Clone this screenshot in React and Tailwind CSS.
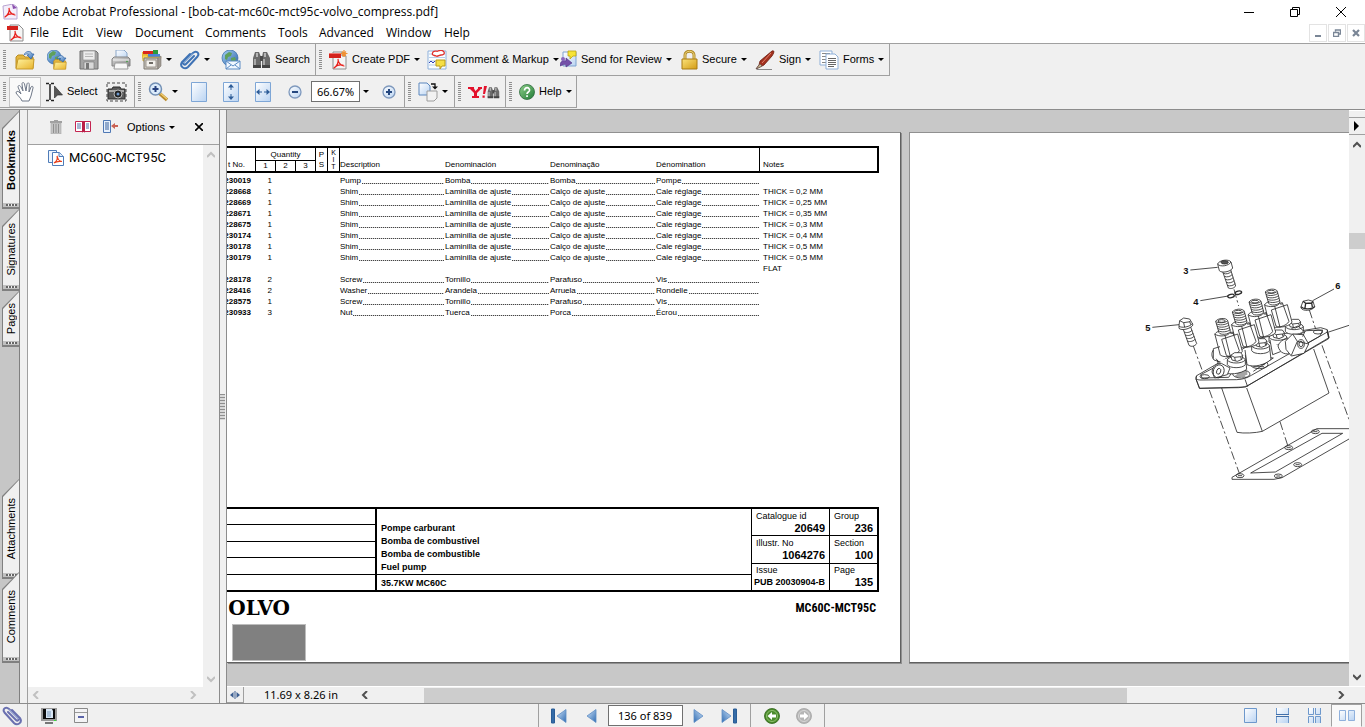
import React, { useState } from "react";

const menuItems = [
  { label: "File", width: "w-8" },
  { label: "Edit", width: "w-[34px]" },
  { label: "View", width: "w-[39px]" },
  { label: "Document", width: "w-[70px]" },
  { label: "Comments", width: "w-[73px]" },
  { label: "Tools", width: "w-[41px]" },
  { label: "Advanced", width: "w-[67px]" },
  { label: "Window", width: "w-[58px]" },
  { label: "Help", width: "w-10" },
];

const shim = ["Shim", "Laminilla de ajuste", "Calço de ajuste", "Cale réglage"];

const parts = [
  { no: "230019", qty: 1, names: ["Pump", "Bomba", "Bomba", "Pompe"] },
  { no: "228668", qty: 1, names: shim, note: "THICK = 0,2 MM" },
  { no: "228669", qty: 1, names: shim, note: "THICK = 0,25 MM" },
  { no: "228671", qty: 1, names: shim, note: "THICK = 0,35 MM" },
  { no: "228675", qty: 1, names: shim, note: "THICK = 0,3 MM" },
  { no: "230174", qty: 1, names: shim, note: "THICK = 0,4 MM" },
  { no: "230178", qty: 1, names: shim, note: "THICK = 0,5 MM" },
  { no: "230179", qty: 1, names: shim, note: "THICK = 0,5 MM" },
  { no: "", qty: "", names: null, note: "FLAT" },
  { no: "228178", qty: 2, names: ["Screw", "Tornillo", "Parafuso", "Vis"] },
  { no: "228416", qty: 2, names: ["Washer", "Arandela", "Arruela", "Rondelle"] },
  { no: "228575", qty: 1, names: ["Screw", "Tornillo", "Parafuso", "Vis"] },
  { no: "230933", qty: 3, names: ["Nut", "Tuerca", "Porca", "Écrou"] },
];

function Ico({ w = 20, h = 20, children }) {
  return (
    <svg width={w} height={h} viewBox={`0 0 ${w} ${h}`} className="shrink-0" aria-hidden="true">
      {children}
    </svg>
  );
}

/* Gradients shared by all of the icons */
function Gradients() {
  const list = [
    ["gYellow", "#fff3a0", "#e8b32c"],
    ["gBlue", "#cfe3f8", "#2f6cb3"],
    ["gPage", "#ffffff", "#b9d3f2"],
    ["gGray", "#d8d8d8", "#8a8a8a"],
    ["gGold", "#fbe27a", "#d39b12"],
    ["gGreen", "#8fd08a", "#1f7a35"],
    ["gGlobe", "#a8d4f5", "#2a5fa8"],
  ];
  return (
    <svg className="absolute size-0" aria-hidden="true">
      <defs>
        {list.map(([id, from, to]) => (
          <linearGradient key={id} id={id} x1="0" y1="0" x2="1" y2="1">
            <stop offset="0" stopColor={from} />
            <stop offset="1" stopColor={to} />
          </linearGradient>
        ))}
      </defs>
    </svg>
  );
}

const Swirl = ({ x = 0, y = 0 }) => (
  <path
    transform={`translate(${x} ${y})`}
    d="M0 9C3 7 5 3 4 0c0 3 2 6.500 6 7M1 8c2-2 5-2.500 8-2"
    fill="none"
    stroke="#e8211c"
    strokeWidth="1.200"
    strokeLinecap="round"
  />
);

const AppIcon = () => (
  <Ico w={16} h={16}>
    <path d="M1 2l10-2 4 3v12H2z" fill="#f4eefa" stroke="#b9a5d3" />
    <path d="M10 0l5 4-4 1z" fill="#8a4fae" />
    <Swirl x={3} y={4} />
  </Ico>
);
const PdfDoc = ({ star }) => (
  <Ico>
    <path d="M5 2h9l4 4v13H5z" fill="#f5f5f5" stroke="#8d8d8d" />
    <path d="M14 2v4h4" fill="#ddd" stroke="#8d8d8d" />
    <path d="M1 3h12v5H1z" fill="#d4221c" />
    <path d="M1 3h12v1H1z" fill="#ef7a74" />
    <Swirl x={6} y={9} />
    {star && <path d="M16 0v7M12.500 3.500h7M14 1.500l4 4M18 1.500l-4 4" stroke="#ef9134" strokeWidth="1.200" />}
  </Ico>
);
const FolderShape = ({ y = 0 }) => (
  <g transform={`translate(0 ${y})`}>
    <path d="M1 7l2-2h5l2 2h8v11H1z" fill="#e3b53d" stroke="#b98d22" />
    <path d="M3 9h16l-1 10H1z" fill="url(#gYellow)" stroke="#c79a2a" />
  </g>
);
const OpenIcon = () => (
  <Ico>
    <FolderShape />
    <path d="M9 5c1-4 7-5 8-1h2l-3 5-4-4h2c-1-2-3-1-5 0z" fill="url(#gBlue)" stroke="#2e62a3" strokeWidth=".7" />
  </Ico>
);
const Globe = ({ r = 7, cx = 7, cy = 7 }) => (
  <g>
    <circle cx={cx} cy={cy} r={r} fill="url(#gGlobe)" stroke="#356aa8" strokeWidth=".7" />
    <path
      transform={`translate(${cx - 7} ${cy - 7})`}
      d="M2 4l4-3 3 1-1 3-3 1-1 3-2-1zM8 7l4-1 1 3-3 4-2-2z"
      fill="#5fa05b"
    />
  </g>
);
const OpenWebIcon = () => (
  <Ico>
    <Globe cx={7} />
    <g transform="translate(6 6) scale(.7)">
      <FolderShape />
    </g>
    <path d="M10 9c2-5 6-4 7-1h2l-3 4-4-3h2c-1-1-2-1-4 0z" fill="url(#gBlue)" stroke="#2e62a3" strokeWidth=".7" />
  </Ico>
);
const SaveIcon = () => (
  <Ico>
    <path d="M1 1h16l2 2v16H1z" fill="#a5a5a5" stroke="#6f6f6f" />
    <path d="M4 1h12v9H4z" fill="#ececec" stroke="#888" strokeWidth=".6" />
    <path d="M6 4h8M6 6.500h8" stroke="#b5b5b5" />
    <path d="M5 12h10v7H5z" fill="#d9d9d9" stroke="#777" strokeWidth=".6" />
    <path d="M7 13h3v6H7z" fill="#777" />
  </Ico>
);
const PrintIcon = () => (
  <Ico>
    <path d="M5 9V0h8l3 3v6z" fill="url(#gPage)" stroke="#8ba7c9" />
    <path d="M1 9l2-2h14l2 2v7H1z" fill="url(#gGray)" stroke="#848484" />
    <path d="M2 10h16" stroke="#f6f6f6" />
    <path d="M4 13h12l1 6H3z" fill="#f7f7f7" stroke="#999" />
    <circle cx="16" cy="11.500" r=".8" fill="#3ca23c" />
  </Ico>
);
const OrganizerIcon = () => (
  <Ico>
    <path d="M0 2h6v5H0z" fill="#f2c73a" />
    <path d="M1 1h10v3H1z" fill="#d8261c" />
    <path d="M11 0h5v4h-5z" fill="#2c9a3c" />
    <path d="M6 4h12v3H6z" fill="#4a84d8" />
    <path d="M0 5h5l1 2h13l-1 4H1z" fill="#f5d44c" stroke="#c79a2a" strokeWidth=".6" />
    <path d="M2 8h14v11H2z" fill="#c9c4bc" stroke="#7f7a72" />
    <path d="M16 8l3-2v10l-3 3z" fill="#a09b93" stroke="#7f7a72" strokeWidth=".6" />
    <path d="M4 10h10v7H4z" fill="#f3f1ec" stroke="#8c877f" strokeWidth=".8" />
    <path d="M7 12h4v2H7z" fill="#6d6a64" />
  </Ico>
);
const ClipIcon = ({ color = "#3f73b5" }) => (
  <Ico>
    <path
      d="M14 6L6 14c-1.500 1.500-3.500 0-2-2l9-9c3-3 7 0 4.500 3.500L8 17c-3 3-9 0-6-5l8-8"
      fill="none"
      stroke={color}
      strokeWidth="2"
      strokeLinecap="round"
    />
    <path d="M13 3.500L3.500 13" stroke="#cfe2f6" strokeWidth=".8" />
  </Ico>
);
const MailIcon = () => (
  <Ico>
    <Globe cx={9} cy={8} r={8} />
    <path d="M5 11h14v8H5z" fill="#f2f8ff" stroke="#5c8cc4" />
    <path d="M5 11l7 5 7-5M5 19l5-4M19 19l-5-4" fill="none" stroke="#5c8cc4" />
  </Ico>
);
const Binoculars = () => (
  <>
    <path d="M3 2h4l2 5v10H1V8zM11 2h4l3 6v9h-8V7z" fill="#6b6b6b" />
    <path d="M4 3h2v4H4zM12 3h2v4h-2z" fill="#b5b5b5" />
    <path d="M8 6h3v5H8z" fill="#4b4b4b" />
    <path d="M2 9h2v7H2zM11 9h2v7h-2z" fill="#a9a9a9" />
    <path d="M1 15h8v3H1zM10 15h8v3h-8z" fill="#444" />
  </>
);
const SearchIcon = () => (
  <Ico w={19}>
    <Binoculars />
  </Ico>
);
const MarkupIcon = () => (
  <Ico>
    <path d="M1 1h18v18H1z" fill="#fafdff" stroke="#8eb1dc" />
    <path d="M2 4h16M2 7.500h16M2 11h16M2 15h16" stroke="#b7cde8" />
    <path d="M6 2c2-2 4 0 5-1 2-1 5-1 6 1s-1 3-3 3-3 2-5 1-5 0-3-4z" fill="#fff" stroke="#e0302c" strokeWidth="1.300" />
    <path d="M2 13l2-2 2 2 2-2" fill="none" stroke="#3142b8" />
    <path d="M9 10h9v6h-3l-2 3v-3H9z" fill="#f5df45" stroke="#b89a1b" />
  </Ico>
);
const ReviewIcon = () => (
  <Ico w={17}>
    <path d="M3 2h13v14H3z" fill="url(#gPage)" stroke="#7fa3d1" />
    <path d="M8 1h8v5h-3l-3 3V6H8z" fill="#f7e436" stroke="#baa213" strokeWidth=".8" />
    <path d="M0 16c0-5 3-6 6-5V8l6 5-6 4v-2c-2-1-3 0-6 1z" fill="#7450a8" stroke="#4d3184" strokeWidth=".6" />
    <circle cx="3" cy="9" r="2" fill="#8a66bd" />
  </Ico>
);
const LockIcon = () => (
  <Ico w={17}>
    <path d="M4 9V5c0-5 9-5 9 0v4" fill="none" stroke="#b08a28" strokeWidth="3" />
    <path d="M4 9V5c0-5 9-5 9 0v4" fill="none" stroke="#f2dc85" strokeWidth="1" />
    <path d="M1 9h15v10H1z" fill="url(#gGold)" stroke="#a87b13" />
  </Ico>
);
const PenIcon = () => (
  <Ico>
    <path d="M17 1c3-1 2 2 0 5l-8 9-4 2-4 2 3-4 1-4z" fill="#a3311f" stroke="#6b1a0e" strokeWidth=".8" />
    <path d="M16 3l-9 10" stroke="#e0826e" />
    <path d="M1 19l4-5 2 2z" fill="#d7c49a" stroke="#555" strokeWidth=".6" />
    <path d="M2 19.500h15" stroke="#888" />
  </Ico>
);
const FormsIcon = () => (
  <Ico>
    <path d="M1 1h12v14H1z" fill="#fff" stroke="#8fb0d9" />
    <path d="M3 3.500h8M3 6.500h4M3 9.500h4M3 12.500h4" stroke="#888" />
    <path d="M7 4h9l3 3v12H7z" fill="#fff" stroke="#8fb0d9" />
    <path d="M9 8.500h8M9 10.500h8M9 12.500h8M9 14.500h8M9 16.500h6" stroke="#666" />
  </Ico>
);
const HandIcon = () => (
  <Ico>
    <path
      d="M7 19c-1-3-4-5-6-8 0-2 2-2 3-1l2 2L3 5c0-2 2-2 3 0l2 4-1-7c0-2 2-2 2.500 0L11 9l1-7c.500-2 2.500-1 2.300.500L14 10l2-5c1-1.500 2.500-.5 2 1l-2 8-2 5z"
      fill="#fff"
      stroke="#6f7888"
    />
  </Ico>
);
const SelectIcon = () => (
  <Ico w={18}>
    <path d="M1 1.500h3M6 1.500h3M5 2v16M1 18.500h3M6 18.500h3" stroke="#222" strokeWidth="1.500" fill="none" />
    <path d="M9.500 4v12l3-3h5z" fill="#555" stroke="#222" strokeWidth=".6" />
  </Ico>
);
const CameraIcon = () => (
  <Ico w={21}>
    <rect x="1" y="1" width="19" height="18" fill="none" stroke="#444" strokeDasharray="3 2" />
    <path d="M2 7h4l1-2h7l1 2h4v10H2z" fill="#5b5b5b" stroke="#2c2c2c" />
    <path d="M3 8h15v2H3z" fill="#a9a9a9" />
    <circle cx="12" cy="12" r="4" fill="#222" stroke="#bbb" />
    <circle cx="12" cy="12" r="1.500" fill="#6f9ad0" />
  </Ico>
);
const ZoomIcon = () => (
  <Ico>
    <path d="M11 11l8 7" stroke="#b98a2b" strokeWidth="3.500" />
    <path d="M12 11l7 6" stroke="#f2cf72" strokeWidth="1.200" />
    <circle cx="7.500" cy="7" r="6" fill="#dcecfb" stroke="#7390b5" strokeWidth="1.500" />
    <path d="M4.500 7h6M7.500 4v6" stroke="#27417f" strokeWidth="2" />
  </Ico>
);
const ViewPageIcon = ({ arrows }) => (
  <Ico w={18} h={20}>
    <path d="M1.500 .5h15v19h-15z" fill="url(#gPage)" stroke="#7ea6d6" />
    {arrows === "v" && (
      <g fill="#2d5c98">
        <path d="M9 2l3 3.500H6zM9 18l3-3.500H6z" />
        <path d="M8.500 5h1v3h-1zM8.500 12h1v3h-1z" />
      </g>
    )}
    {arrows === "h" && (
      <g fill="#2d5c98">
        <path d="M2 10l3.500-3v6zM16 10l-3.500-3v6z" />
        <path d="M5 9.500h3v1H5zM10 9.500h3v1h-3z" />
      </g>
    )}
  </Ico>
);
const RoundSign = ({ plus }) => (
  <Ico w={14} h={14}>
    <circle cx="7" cy="7" r="6" fill="url(#gPage)" stroke="#7f99bd" strokeWidth="1.300" />
    <path d={plus ? "M4 7h6M7 4v6" : "M4 7h6"} stroke="#26487f" strokeWidth="2" />
  </Ico>
);
const RotateIcon = () => (
  <Ico>
    <path d="M1 1h8l3 3v9H1z" fill="url(#gPage)" stroke="#5a86bd" />
    <path d="M9 9h10v7l-3 3H9z" fill="#f2f2f2" stroke="#9c9c9c" />
    <path d="M13 2h4v3" fill="none" stroke="#111" strokeWidth="1.300" />
    <path d="M14 4.500h6l-3 3z" fill="#111" />
  </Ico>
);
const YahooIcon = () => (
  <Ico w={32} h={14}>
    <path d="M0 2h6v1.500L7.500 6 10 3.500V2h4v2h-1L9 8v3h2v2H4v-2h2V8L2 4H0z" fill="#e3122c" />
    <path d="M16 1h3l-2 8h-2zM14.500 10.500h2.200v2.200h-2.200z" fill="#e3122c" />
    <g transform="translate(19 1) scale(.68)">
      <Binoculars />
    </g>
  </Ico>
);
const HelpIcon = () => (
  <Ico w={16} h={16}>
    <circle cx="8" cy="8" r="7.500" fill="url(#gGreen)" stroke="#2d6b3c" strokeWidth=".8" />
    <path d="M5.500 6.500c0-4 5.500-3.500 5 0-.2 1.500-2.500 1.500-2.500 3.500" fill="none" stroke="#fff" strokeWidth="1.700" />
    <path d="M7.200 11.200h1.700v1.700H7.200z" fill="#fff" />
  </Ico>
);
const TrashIcon = () => (
  <Ico w={14} h={14}>
    <path d="M5 0h4v1h4v2H1V1h4z" fill="#a0a0a0" />
    <path d="M2 3h10v11H2z" fill="#c4c4c4" stroke="#aaa" strokeWidth=".6" />
    <path d="M4.500 4v9M7 4v9M9.500 4v9" stroke="#8f8f8f" />
  </Ico>
);
const BookIcon = () => (
  <Ico w={16} h={14}>
    <path d="M.5 1.500h15v10H.5z" fill="#fff" stroke="#c42451" />
    <path d="M2 4h4M2 6h4M2 8h4M11 4h3M11 6h3M11 8h3" stroke="#4f6fa8" />
    <path d="M7 1.500h3V13l-1.500-2L7 13z" fill="#b91f48" />
  </Ico>
);
const ExpandIcon = () => (
  <Ico w={15} h={14}>
    <path d="M.5 .5h7v12h-7z" fill="#e8f1fc" stroke="#5079b5" />
    <path d="M2 3h4M2 5h4M2 7h4M2 9h4" stroke="#38609c" />
    <path d="M8 6l4-3v2h3v2h-3v2z" fill="#c96254" />
  </Ico>
);
const BookmarkIcon = () => (
  <Ico w={16} h={16}>
    <path d="M.5 .5h8v12h-8z" fill="#eef5fd" stroke="#4f7cb8" />
    <path d="M4.500 2.500h7l4 4v9h-11z" fill="#fff" stroke="#4f7cb8" />
    <path d="M11 2.500v4h4.500" fill="#dcebfa" stroke="#4f7cb8" />
    <path d="M6 13c3-2 4-4 3-7 1 4 2 5 5 5.500-3-.5-6 0-8 1.500z" fill="none" stroke="#e8401c" strokeWidth="1.200" />
  </Ico>
);
const Tri = ({ flip, bar }) => (
  <Ico w={bar ? 16 : 11} h={16}>
    <g transform={flip ? `translate(${bar ? 16 : 11} 0) scale(-1 1)` : undefined}>
      {bar && <path d="M.5 1h3v14h-3z" fill="#356ca8" stroke="#2b5d96" />}
      <path
        transform={bar ? "translate(5 0)" : undefined}
        d="M10 1.500v13L1 8z"
        fill="url(#gBlue)"
        stroke="#5e8dc4"
        strokeWidth=".8"
      />
    </g>
  </Ico>
);
const RoundArrow = ({ green }) => (
  <Ico w={16} h={16}>
    <circle cx="8" cy="8" r="7.500" fill={green ? "#4b8b2c" : "#b5b5b5"} stroke={green ? "#2f6518" : "#a4a4a4"} strokeWidth=".8" />
    <circle cx="8" cy="8" r="5.500" fill="none" stroke={green ? "#8fc06f" : "#d6d6d6"} />
    <path
      transform={green ? undefined : "translate(16 0) scale(-1 1)"}
      d="M3.500 8L8 4v2.500h4v3H8V12z"
      fill="#fff"
    />
  </Ico>
);
const Chevron = ({ d, color = "#505050" }) => (
  <Ico w={8} h={8}>
    <path d={d} fill="none" stroke={color} strokeWidth="2" />
  </Ico>
);
const UP = "M0 6l4-4 4 4";
const DOWN = "M0 2l4 4 4-4";
const LEFT = "M6 0L2 4l4 4";
const RIGHT = "M2 0l4 4-4 4";

const Grip = () => (
  <span className="h-5 w-[3px] shrink-0 bg-[repeating-linear-gradient(to_bottom,#8f8f8f_0_1px,#f0f0f0_1px_2px)]" />
);

const Caret = () => (
  <svg width="6" height="3" viewBox="0 0 6 3" className="shrink-0" aria-hidden="true">
    <path d="M0 0h6L3 3z" fill="#000" />
  </svg>
);

function Tool({ icon, label, caret, width, title }) {
  return (
    <button title={title || label} className={`flex h-full shrink-0 items-center gap-1 whitespace-nowrap ${width}`}>
      {icon}
      {label}
      {caret && <Caret />}
    </button>
  );
}

const groupClass = "flex h-full shrink-0 items-center border-r border-b border-[#a0a0a0] pl-[3px]";

function Toolbars() {
  return (
    <div className="border-b border-[#8c8c8c] bg-[#f0f0f0] pb-px text-[11px]">
      <div className="flex h-8">
        <div className={groupClass}>
          <Grip />
          <div className="ml-[9px] flex h-full">
            <Tool icon={<OpenIcon />} width="w-8" title="Open" />
            <Tool icon={<OpenWebIcon />} width="w-8" title="Open Web Page" />
            <Tool icon={<SaveIcon />} width="w-8" title="Save" />
            <Tool icon={<PrintIcon />} width="w-[31px]" title="Print" />
            <Tool icon={<OrganizerIcon />} width="w-[38px]" title="Organizer" caret />
            <Tool icon={<ClipIcon />} width="w-[41px]" title="Attach" caret />
            <Tool icon={<MailIcon />} width="w-[31px]" title="Email" />
            <Tool icon={<SearchIcon />} width="w-[63px]" label="Search" />
          </div>
        </div>
        <div className={groupClass}>
          <Grip />
          <div className="ml-[6px] flex h-full">
            <Tool icon={<PdfDoc star />} width="w-[99px]" label="Create PDF" caret />
            <Tool icon={<MarkupIcon />} width="w-[133px]" label="Comment &amp; Markup" caret />
            <Tool icon={<ReviewIcon />} width="w-[121px]" label="Send for Review" caret />
            <Tool icon={<LockIcon />} width="w-[74px]" label="Secure" caret />
            <Tool icon={<PenIcon />} width="w-16" label="Sign" caret />
            <Tool icon={<FormsIcon />} width="w-[70px]" label="Forms" caret />
          </div>
        </div>
      </div>

      <div className="flex h-8">
        <div className={groupClass}>
          <Grip />
          <button title="Hand Tool" className="ml-[3px] flex h-[30px] w-8 items-center justify-center border border-[#c4c4c4] bg-[#f9f9f9]">
            <HandIcon />
          </button>
          <div className="ml-1 flex h-full">
            <Tool icon={<SelectIcon />} width="w-[61px]" label="Select" />
            <Tool icon={<CameraIcon />} width="w-[28px]" title="Snapshot" />
          </div>
        </div>
        <div className={groupClass}>
          <Grip />
          <div className="ml-[7px] flex h-full">
            <Tool icon={<ZoomIcon />} width="w-[42px]" title="Zoom" caret />
            <Tool icon={<ViewPageIcon />} width="w-8" title="Actual Size" />
            <Tool icon={<ViewPageIcon arrows="v" />} width="w-8" title="Fit Page" />
            <Tool icon={<ViewPageIcon arrows="h" />} width="w-[34px]" title="Fit Width" />
            <Tool icon={<RoundSign />} width="w-[23px]" title="Zoom Out" />
          </div>
          <input
            aria-label="Zoom level"
            defaultValue="66.67%"
            className="h-[21px] w-[49px] border border-[#707070] bg-white pl-[5px] font-['Noto_Sans',sans-serif] text-[11px] outline-none"
          />
          <button title="Zoom presets" className="flex h-full w-[22px] items-center pl-[3px]">
            <Caret />
          </button>
          <Tool icon={<RoundSign plus />} width="w-[22px]" title="Zoom In" />
        </div>
        <div className={groupClass}>
          <Grip />
          <div className="ml-[7px] flex h-full">
            <Tool icon={<RotateIcon />} width="w-9" title="Rotate" caret />
          </div>
        </div>
        <div className={groupClass}>
          <Grip />
          <div className="ml-[7px] flex h-full">
            <Tool icon={<YahooIcon />} width="w-[37px]" title="Yahoo! Search" />
          </div>
        </div>
        <div className={groupClass}>
          <Grip />
          <div className="ml-[7px] flex h-full">
            <Tool icon={<HelpIcon />} width="w-[57px]" label="Help" caret />
          </div>
        </div>
      </div>
    </div>
  );
}

function TitleBar() {
  return (
    <header className="bg-white font-['Open_Sans','Noto_Sans',sans-serif] text-xs">
      <div className="flex h-[23px] items-center pl-[2px]">
        <AppIcon />
        <h1 className="ml-[5px] flex-1 truncate">
          Adobe Acrobat Professional - [bob-cat-mc60c-mct95c-volvo_compress.pdf]
        </h1>
        <div className="flex h-full pr-[1px]">
          <button title="Minimize" className="flex w-[46px] items-center justify-center">
            <Ico w={10} h={10}>
              <path d="M0 5.500h10" stroke="#000" />
            </Ico>
          </button>
          <button title="Restore" className="flex w-[46px] items-center justify-center">
            <Ico w={10} h={10}>
              <path d="M.5 2.500h7v7h-7zM2.500 2.500v-2h7v7h-2" fill="none" stroke="#000" />
            </Ico>
          </button>
          <button title="Close" className="flex w-[46px] items-center justify-center">
            <Ico w={10} h={10}>
              <path d="M0 0l10 10M10 0L0 10" stroke="#000" />
            </Ico>
          </button>
        </div>
      </div>
      <div className="flex h-[21px] items-center border-b border-[#a0a0a0] pl-[6px]">
        <Ico w={18} h={18}>
          <path d="M4 1h9l4 4v12H4z" fill="#f5f5f5" stroke="#8d8d8d" />
          <path d="M1 2h11v4H1z" fill="#d4221c" />
          <Swirl x={5} y={7} />
        </Ico>
        <nav className="ml-[6px] flex flex-1">
          {menuItems.map(({ label, width }) => (
            <button key={label} className={`shrink-0 text-left ${width}`}>
              {label}
            </button>
          ))}
        </nav>
        <div className="flex gap-px text-[#7a8696]">
          <button title="Minimize document" className="flex size-[18px] items-center justify-center border border-[#e3e3e3]">
            <Ico w={8} h={8}>
              <path d="M1 6h6v2H1z" fill="currentColor" />
            </Ico>
          </button>
          <button title="Restore document" className="flex size-[18px] items-center justify-center border border-[#e3e3e3]">
            <Ico w={8} h={8}>
              <path d="M2.500 2.500V1H7.500v4H6M.5 3.500h5v4h-5z" fill="none" stroke="currentColor" strokeWidth="1.400" />
            </Ico>
          </button>
          <button title="Close document" className="flex size-[18px] items-center justify-center border border-[#e3e3e3]">
            <Ico w={8} h={8}>
              <path d="M1 1l6 6M7 1L1 7" stroke="currentColor" strokeWidth="2.200" />
            </Ico>
          </button>
        </div>
      </div>
    </header>
  );
}

function SideTab({ label, height, active, onClick, className = "" }) {
  return (
    <button
      onClick={onClick}
      className={`ml-[2px] flex shrink-0 bg-[#808080] pt-px pl-px [clip-path:polygon(100%_0,100%_100%,0_100%,0_17px)] ${height} ${className}`}
    >
      <span className="flex h-full w-full flex-col bg-[#f0f0f0] [clip-path:polygon(100%_0,100%_100%,0_100%,0_17px)]">
        <span className="flex flex-1 items-center justify-center pt-1">
          <span
            className={`rotate-180 whitespace-nowrap text-[11px] leading-[14px] [writing-mode:vertical-rl] ${
              active ? "font-bold" : ""
            }`}
          >
            {label}
          </span>
        </span>
        <span className="flex h-[6px] items-center justify-center border-b-2 border-[#808080] bg-[#c0c0c0]">
          <span className="h-[2px] w-[11px] bg-[repeating-linear-gradient(to_right,#666_0_2px,#eee_2px_3px)]" />
        </span>
      </span>
    </button>
  );
}

function Sidebar() {
  const [tab, setTab] = useState("Bookmarks");
  const tabProps = (name) => ({ label: name, active: tab === name, onClick: () => setTab(name) });

  return (
    <div className="flex shrink-0 bg-[#f0f0f0]">
      {/* Vertical tabs */}
      <div className="flex w-5 flex-col border-r border-[#808080] bg-[#c6c6c6] pt-px pb-10">
        <SideTab {...tabProps("Bookmarks")} height="h-[98px]" />
        <SideTab {...tabProps("Signatures")} height="h-[82px]" />
        <SideTab {...tabProps("Pages")} height="h-14" />
        <SideTab {...tabProps("Attachments")} height="h-[100px]" className="mt-auto" />
        <SideTab {...tabProps("Comments")} height="h-[91px]" className="-mt-[7px]" />
      </div>

      {/* Bookmarks panel */}
      <div className="ml-[7px] flex w-[193px] flex-col border-r border-l border-r-[#8c8c8c] border-l-[#a0a0a0]">
        <div className="flex h-[35px] items-center border-b border-[#a0a0a0] pl-[21px] text-[11px]">
          <button title="Delete" className="w-[26px]">
            <TrashIcon />
          </button>
          <button title="New bookmark" className="w-7">
            <BookIcon />
          </button>
          <button title="Expand current bookmark" className="w-6">
            <ExpandIcon />
          </button>
          <button className="flex w-[68px] items-center gap-1">
            Options
            <Caret />
          </button>
          <button title="Hide panel">
            <Ico w={8} h={8}>
              <path d="M0 0l8 8M8 0L0 8" stroke="#000" strokeWidth="1.600" />
            </Ico>
          </button>
        </div>
        <div className="flex min-h-0 flex-1">
          <ul className="flex-1 bg-white pt-1 pl-5">
            <li>
              <a href="#page-136" className="flex items-center gap-[5px] font-['Roboto',sans-serif] text-[13px] leading-[18px]">
                <BookmarkIcon />
                MC60C-MCT95C
              </a>
            </li>
          </ul>
          <div className="flex w-4 flex-col items-center justify-between pt-[6px] pb-1">
            <Chevron d={UP} color="#c0c0c0" />
            <Chevron d={DOWN} color="#c0c0c0" />
          </div>
        </div>
        <div className="flex h-4 items-center justify-between pr-[22px] pl-1">
          <Chevron d={LEFT} color="#c0c0c0" />
          <Chevron d={RIGHT} color="#c0c0c0" />
        </div>
      </div>

      {/* Splitter */}
      <div className="flex w-[7px] items-center border-r border-[#8c8c8c]">
        <span className="h-[26px] w-[5px] bg-[repeating-linear-gradient(to_bottom,#8f8f8f_0_1px,#d8d8d8_1px_3px)]" />
      </div>
    </div>
  );
}

function PartsTable() {
  const head = "border-t-2 border-b-2 border-black p-0 pb-px pl-px text-left align-bottom font-normal";
  return (
    <table className="w-[652px] table-fixed border-separate border-spacing-0 text-[8px] leading-[11px]">
      <colgroup>
        <col className="w-7" />
        <col className="w-5" />
        <col className="w-5" />
        <col className="w-5" />
        <col className="w-3" />
        <col className="w-3" />
        <col className="w-[105px]" />
        <col className="w-[105px]" />
        <col className="w-[106px]" />
        <col className="w-[104px]" />
        <col className="w-[120px]" />
      </colgroup>
      <thead>
        <tr className="h-[14px]">
          <th rowSpan={2} className={head}>t No.</th>
          <th colSpan={3} className="border-t-2 border-l border-black p-0 text-center font-normal">Quantity</th>
          <th rowSpan={2} className="border-t-2 border-b-2 border-l border-black p-0 text-center text-[8px] leading-[10px] font-normal">
            P<br />S
          </th>
          <th rowSpan={2} className="border-t-2 border-b-2 border-l border-black p-0 text-center text-[7px] leading-[7px] font-normal">
            K<br />I<br />T
          </th>
          <th rowSpan={2} className="border-t-2 border-b-2 border-l border-black p-0 pb-px text-left align-bottom font-normal">Description</th>
          <th rowSpan={2} className={head}>Denominación</th>
          <th rowSpan={2} className={head}>Denominação</th>
          <th rowSpan={2} className={head}>Dénomination</th>
          <th rowSpan={2} className="border-2 border-l border-black p-0 pb-px pl-[3px] text-left align-bottom font-normal">Notes</th>
        </tr>
        <tr className="h-[13px] leading-[10px]">
          {[1, 2, 3].map((n) => (
            <th key={n} className="border-t border-b-2 border-l border-black p-0 text-center font-normal">{n}</th>
          ))}
        </tr>
      </thead>
      <tbody>
        <tr className="h-[2px]" />
        {parts.map(({ no, qty, names, note }, i) => (
          <tr key={i} className="h-[11px]">
            <td className="p-0 pr-1 font-bold">
              <span className="flex justify-end">{no}</span>
            </td>
            <td className="p-0 pr-[3px] text-right">{qty}</td>
            <td colSpan={4} className="p-0" />
            {names ? (
              names.map((name, j) => (
                <td key={j} className="p-0 pl-px">
                  <span className="flex items-end">
                    {name}
                    <span className="mb-[2px] ml-px h-px flex-1 bg-[repeating-linear-gradient(to_right,#444_0_1px,#ccc_1px_2px)]" />
                  </span>
                </td>
              ))
            ) : (
              <td colSpan={4} className="p-0" />
            )}
            <td className="p-0 pl-1">{note}</td>
          </tr>
        ))}
      </tbody>
    </table>
  );
}

function InfoCell({ label, value, small }) {
  return (
    <div className="flex flex-1 flex-col justify-center pt-px pr-1 pl-1">
      <dt className="text-[9px] leading-[11px]">{label}</dt>
      <dd
        className={`flex justify-end leading-[13px] font-bold whitespace-nowrap ${small ? "text-[9px]" : "text-[11px]"}`}
      >
        {value}
      </dd>
    </div>
  );
}

function PageFooter() {
  return (
    <div className="mt-auto">
      <div className="flex h-[85px] w-[652px] border-t-2 border-r-2 border-b-2 border-black">
        <div className="flex w-[148px] flex-col divide-y divide-black">
          <div className="flex-1" />
          <div className="flex-1" />
          <div className="flex-1" />
          <div className="flex-1" />
          <div className="flex-1" />
        </div>
        <div className="flex flex-1 flex-col border-l-2 border-black text-[9px] font-bold">
          <div className="flex flex-1 flex-col justify-end border-b border-black pl-1 leading-[13px]">
            <p>Pompe carburant</p>
            <p>Bomba de combustivel</p>
            <p>Bomba de combustible</p>
            <p>Fuel pump</p>
          </div>
          <p className="h-[15px] pl-1 leading-4">35.7KW MC60C</p>
        </div>
        <dl className="flex w-[78px] flex-col divide-y divide-black border-l border-black">
          <InfoCell label="Catalogue id" value="20649" />
          <InfoCell label="Illustr. No" value="1064276" />
          <InfoCell label="Issue" value="PUB 20030904-B" small />
        </dl>
        <dl className="flex w-12 flex-col divide-y divide-black border-l border-black">
          <InfoCell label="Group" value="236" />
          <InfoCell label="Section" value="100" />
          <InfoCell label="Page" value="135" />
        </dl>
      </div>
      <div className="flex h-8 w-[652px] items-center justify-between pr-[3px]">
        <span className="flex w-[63px] justify-end font-['DejaVu_Serif',serif] text-[20px] leading-8 font-bold">OLVO</span>
        <span className="font-['Roboto_Condensed','Liberation_Sans_Narrow','Liberation_Sans',sans-serif] text-xs font-bold">
          MC60C-MCT95C
        </span>
      </div>
      <div className="mb-px ml-[5px] h-[37px] w-[74px] border border-[#bdbdbd] bg-[#808080]" />
    </div>
  );
}

/* One injector outlet: threaded stub, hex body and collar */
const Injector = ({ x, y }) => (
  <g transform={`translate(${x} ${y})`}>
    <path d="M18 62l14 48c10 8 44 0 48-12L66 46z" fill="#fff" />
    <path d="M-3 48c4-10 16-12 24-10M-2 48l16 62M-3 46c14 10 40 6 46-4l8-2 20 56c-6 14-40 24-56 14M28 50l16 64M44 44l8 0" />
    <path d="M0 8c6-10 32-12 36-2l8 32c-4 10-30 12-34 4z" fill="#fff" />
    <path d="M0 8c6 6 28 6 36-2M2 15c8 6 28 4 36-3M4 22c8 6 28 4 36-3M6 29c8 6 28 4 36-3M8 36c8 6 28 4 36-3" />
    <ellipse cx="18" cy="7" rx="11" ry="4" />
  </g>
);

const Stud = ({ x, y }) => (
  <g transform={`translate(${x} ${y})`}>
    <path d="M-26 8c0-12 50-16 54 0v14c-8 12-48 12-54 0z" fill="#fff" />
    <path d="M-26 8c8 12 44 12 54 0" />
    <path d="M-16-6l12-8 18 0 6 8-2 12-14 6-16-4z" fill="#fff" />
    <path d="M-16-6l12 6 18-2 6-4M-4 0l2 10M14-2l2 8" />
  </g>
);

function PumpDrawing() {
  return (
    <svg
      width="219"
      height="250"
      viewBox="0 0 657 750"
      fill="none"
      stroke="#2a2a2a"
      strokeWidth="2.500"
      strokeLinejoin="round"
      role="img"
      aria-label="Fuel pump"
    >
      {/* gasket */}
      <path d="M306 712L552 571l8-5h97M306 712v6h126l24-5 201-116" />
      <path d="M362 699l214-119h62L436 696z" />
      <ellipse cx="330" cy="707" rx="12" ry="6" />
      <ellipse cx="445" cy="708" rx="12" ry="6" />
      <ellipse cx="503" cy="674" rx="12" ry="6" />
      <ellipse cx="476" cy="623" rx="12" ry="6" />
      <ellipse cx="556" cy="575" rx="12" ry="6" />
      <path d="M324 707h12M439 708h12M497 674h12M470 623h12M550 575h12" />
      {/* centre lines */}
      <path d="M190 318l32 88M238 450l90 250M450 545l24 74M576 316l81 222M312 148l14 50M538 210l20 60" strokeDasharray="26 8 7 8" />

      {/* lower housing */}
      <path d="M275 444l46 133c20 4 56 2 76-3l200-115-46-132M350 444l47 130" />

      {/* flange */}
      <path d="M198 417l2-10 200-116 172-28 20 6 5 24-250 148-138 4z" fill="#fff" />
      <path d="M200 407c-6 10 0 12 10 13l110-1c20-1 30-5 44-13l230-131M198 417l10 28 118-2c16-1 22-4 30-8l240-139-5-24" />
      <path d="M345 418l8 22M592 270l5 24" />
      <path d="M212 404l46-24c20-4 40 4 50 14l-12 18-80 2zM470 304l60-32 48-2-8 18-60 34" />
      <ellipse cx="224" cy="410" rx="14" ry="6" />
      <ellipse cx="564" cy="276" rx="14" ry="6" />
      <ellipse cx="334" cy="402" rx="26" ry="12" />
      <ellipse cx="388" cy="374" rx="26" ry="12" />
      <path d="M316 396h36M320 402h32M316 408h30M370 368h36M372 374h32M370 380h32M340 372l40-22 50 4-60 40" />

      <Stud x={492} y={252} />
      <Stud x={443} y={284} />
      <Injector x={406} y={148} />
      <Injector x={357} y={178} />
      <path d="M345 330l6 44c20 10 56 0 72-16l-4-34M420 300l8 44 36-14" fill="#fff" />
      <Stud x={391} y={310} />
      <Injector x={307} y={208} />
      <Injector x={257} y={236} />
      <path d="M262 362l10 34c24 10 60 6 78-8l-4-44M250 330c-6 8-6 20 2 30l20 6" fill="#fff" />
      <Stud x={318} y={352} />
      <path d="M250 326l20-6M250 326v30M258 356l16 20" />

      {/* side plugs */}
      <path d="M444 318c6-18 24-24 38-20l2 42c-16 4-34 2-40-22z" fill="#fff" />
      <path d="M466 304l22-22 32 2 16 28-14 28-38 8-16-20z" fill="#fff" />
      <path d="M488 282l14 22-18 42M502 304l34 8" />
      <ellipse cx="513" cy="312" rx="10" ry="13" />
      <ellipse cx="513" cy="312" rx="6" ry="8" />
      <path d="M246 396c2-18 14-26 28-26l26 14-8 20-38 10z" fill="#fff" />
      <ellipse cx="266" cy="394" rx="16" ry="20" transform="rotate(20 266 394)" />
      <ellipse cx="266" cy="394" rx="6" ry="9" transform="rotate(20 266 394)" />
      <path d="M484 266l20-8 20 18-6 14" />

      {/* socket screw */}
      <path d="M277 92l18 52c8 4 18 0 22-6l-16-52z" fill="#fff" />
      <path d="M280 100c8 4 20 0 24-6M283 109c8 4 20 0 24-6M286 118c8 4 20 0 24-6M289 127c8 4 20 0 24-6M292 136c8 4 20 0 24-6" />
      <path d="M263 72c4-12 34-16 40-6l5 18c-6 12-34 16-40 8z" fill="#fff" />
      <path d="M263 72c6 10 34 6 40-6" />
      <ellipse cx="284" cy="67" rx="11" ry="5" fill="#555" />
      <ellipse cx="303" cy="168" rx="10" ry="5" transform="rotate(-12 303 168)" strokeWidth="4" />
      <ellipse cx="325" cy="158" rx="10" ry="5" transform="rotate(-12 325 158)" strokeWidth="4" />

      {/* flanged screw */}
      <path d="M159 266l18 50c8 6 18 2 23-5l-18-50z" fill="#fff" />
      <path d="M163 276c8 4 20 0 24-6M166 285c8 4 20 0 24-6M169 294c8 4 20 0 24-6M172 303c8 4 20 0 24-6" />
      <path d="M147 256l2-14 12-8 18 3 6 10 4 8c-8 12-34 18-42 10z" fill="#fff" />
      <path d="M149 242l12 6 20-3M161 248l3 14M179 244l3 10M147 258c8 8 34 2 41-8" />

      {/* nut */}
      <path d="M513 200l6-16 16-4 14 4 5 16c-8 14-36 14-41 4z" fill="#fff" />
      <path d="M519 184l8 6 18-1 4-5M527 190l-2 14M545 189l2 12M513 200c8 10 34 8 41-1" strokeWidth="4" />

      {/* call-outs */}
      <path d="M181 90l82-8M211 182l84-14M67 262l80-8M548 182l64-35M596 276l61-20" />
      <g fill="#111" stroke="none" fontFamily="Liberation Sans, sans-serif" fontWeight="bold" fontSize="28">
        <text x="160" y="102">3</text>
        <text x="190" y="195">4</text>
        <text x="46" y="273">5</text>
        <text x="616" y="148">6</text>
      </g>
    </svg>
  );
}

function DocumentView() {
  return (
    <div className="flex min-w-0 flex-1 flex-col bg-[#f0f0f0]">
      <div className="flex min-h-0 flex-1">
        <div className="flex min-w-0 flex-1 gap-2 overflow-hidden bg-[#c8c8c8] pt-[22px] pb-[23px]">
          <section id="page-136" className="flex w-[674px] shrink-0 flex-col overflow-hidden border-t border-r border-b border-t-[#909090] border-r-[#606060] border-b-[#606060] bg-white pt-[13px] shadow-[1px_1px_0_#909090]">
            <PartsTable />
            <PageFooter />
          </section>
          <section className="min-w-0 flex-1 overflow-hidden border-t border-b border-l border-t-[#909090] border-b-[#606060] border-l-[#909090] bg-white pt-[107px] pl-[220px] shadow-[0_1px_0_#909090]">
            <PumpDrawing />
          </section>
        </div>

        {/* Vertical scroll bar */}
        <div className="flex w-4 shrink-0 flex-col items-center">
          <div className="h-2 w-full border-t border-b border-t-white border-b-[#a0a0a0]" />
          <button title="Show toolbar menu" className="flex h-[17px] w-full items-center justify-center border-b border-[#a0a0a0]">
            <Ico w={6} h={10}>
              <path d="M0 0l5 5-5 5z" fill="#000" />
            </Ico>
          </button>
          <div className="mt-[6px]">
            <Chevron d={UP} />
          </div>
          <div className="mt-[84px] h-4 w-full bg-[#cdcdcd]" />
          <div className="mt-auto mb-[5px]">
            <Chevron d={DOWN} />
          </div>
        </div>
      </div>

      {/* Page size and horizontal scroll bar */}
      <div className="flex h-[17px] items-center border-t border-white font-['Noto_Sans',sans-serif] text-[11px]">
        <button title="Split" className="flex h-4 w-[17px] items-center justify-center border-r border-b border-[#a0a0a0]">
          <Ico w={10} h={8}>
            <path d="M5 0v8" stroke="#3d5f92" />
            <path d="M0 4l3.500-3v6zM10 4L6.500 1v6z" fill="#3d5f92" />
          </Ico>
        </button>
        <span className="w-[113px] pl-5 leading-[14px] whitespace-nowrap">11.69 x 8.26 in</span>
        <div className="flex flex-1 items-center pl-1">
          <Chevron d={LEFT} />
          <div className="ml-[55px] flex h-[15px] flex-1">
            <div className="w-[77%] bg-[#cdcdcd]" />
          </div>
          <div className="mr-5">
            <Chevron d={RIGHT} />
          </div>
        </div>
      </div>
    </div>
  );
}

function StatusBar() {
  const nav = "flex h-full shrink-0 items-center";
  return (
    <footer className="flex h-[23px] shrink-0 items-center bg-[#f0f0f0]">
      <div className="flex h-full flex-1 items-center">
        <button title="Attachments" className="flex h-full w-7 items-center border-r border-[#a0a0a0] pl-[2px]">
          <span className="-scale-x-100">
            <ClipIcon color="#6a70b0" />
          </span>
        </button>
        <button title="Full screen" className="ml-[13px]">
          <Ico w={16} h={16}>
            <path d="M0 0h16v13H0z" fill="#999" />
            <path d="M2 1h12v10H2z" fill="#0a0a0a" />
            <path d="M5 1h6l1 2v7H5z" fill="#d9e7f5" />
            <path d="M6 4h4M6 6h4M6 8h4" stroke="#7d99b8" />
            <path d="M4 14h8v2H4z" fill="#777" />
            <path d="M13 12h2v1h-2z" fill="#3ce03c" />
          </Ico>
        </button>
        <button title="Hide toolbars" className="ml-[17px]">
          <Ico w={14} h={15}>
            <path d="M.5 .5h13v14H.5z" fill="#f3f3f5" stroke="#8a8a8a" />
            <path d="M1 4.500h12" stroke="#999" />
            <path d="M4 9h6" stroke="#5a63a8" strokeWidth="2" />
          </Ico>
        </button>
      </div>
      <div className="flex h-full items-center border-r border-l border-[#a0a0a0]">
        <button title="First page" className={`${nav} ml-3 w-[35px]`}><Tri bar /></button>
        <button title="Previous page" className={`${nav} w-[22px]`}><Tri /></button>
        <input
          aria-label="Page"
          defaultValue="136 of 839"
          className="h-[21px] w-[75px] border border-[#707070] bg-white text-center font-['Noto_Sans',sans-serif] text-[11px] outline-none"
        />
        <button title="Next page" className={`${nav} ml-[10px] w-7`}><Tri flip /></button>
        <button title="Last page" className={`${nav} w-[30px] border-r border-[#a0a0a0]`}><Tri flip bar /></button>
        <button title="Previous view" className={`${nav} ml-[13px] w-8`}><RoundArrow green /></button>
        <button title="Next view" className={`${nav} w-[28px]`}><RoundArrow /></button>
      </div>
      <div className="flex h-full flex-1 items-center justify-end pr-[3px]">
        <button title="Single page" className="w-8">
          <Ico w={14} h={15}><path d="M.5 .5h12v14H.5z" fill="url(#gPage)" stroke="#6d98cc" /></Ico>
        </button>
        <button title="Continuous" className="w-8">
          <Ico w={14} h={15}>
            <path d="M.5 0v6.500h12V0M.5 15V8.500h12V15" fill="url(#gPage)" stroke="#6d98cc" />
            <path d="M0 6.500h13M0 8.500h13" stroke="#3f6fab" />
          </Ico>
        </button>
        <button title="Continuous facing" className="w-[23px]">
          <Ico w={14} h={15}>
            <path d="M.5 0v6.500h5V0M7.500 0v6.500h5V0M.5 15V8.500h5V15M7.500 15V8.500h5V15" fill="url(#gPage)" stroke="#6d98cc" />
          </Ico>
        </button>
        <button title="Facing" className="flex h-full w-[31px] items-center justify-center border border-[#a0a0a0] border-b-transparent bg-[#f9f9f9]">
          <Ico w={16} h={11}>
            <path d="M.5 .5h6v10h-6zM9.500 .5h6v10h-6z" fill="url(#gPage)" stroke="#8fb0dc" />
          </Ico>
        </button>
      </div>
    </footer>
  );
}

export default function App() {
  return (
    <div className="flex h-screen flex-col overflow-hidden bg-[#f0f0f0] font-['Liberation_Sans',Arial,sans-serif] text-black">
      <Gradients />
      <TitleBar />
      <Toolbars />
      <main className="flex min-h-0 flex-1 border-b border-[#8c8c8c]">
        <Sidebar />
        <DocumentView />
      </main>
      <StatusBar />
    </div>
  );
}
